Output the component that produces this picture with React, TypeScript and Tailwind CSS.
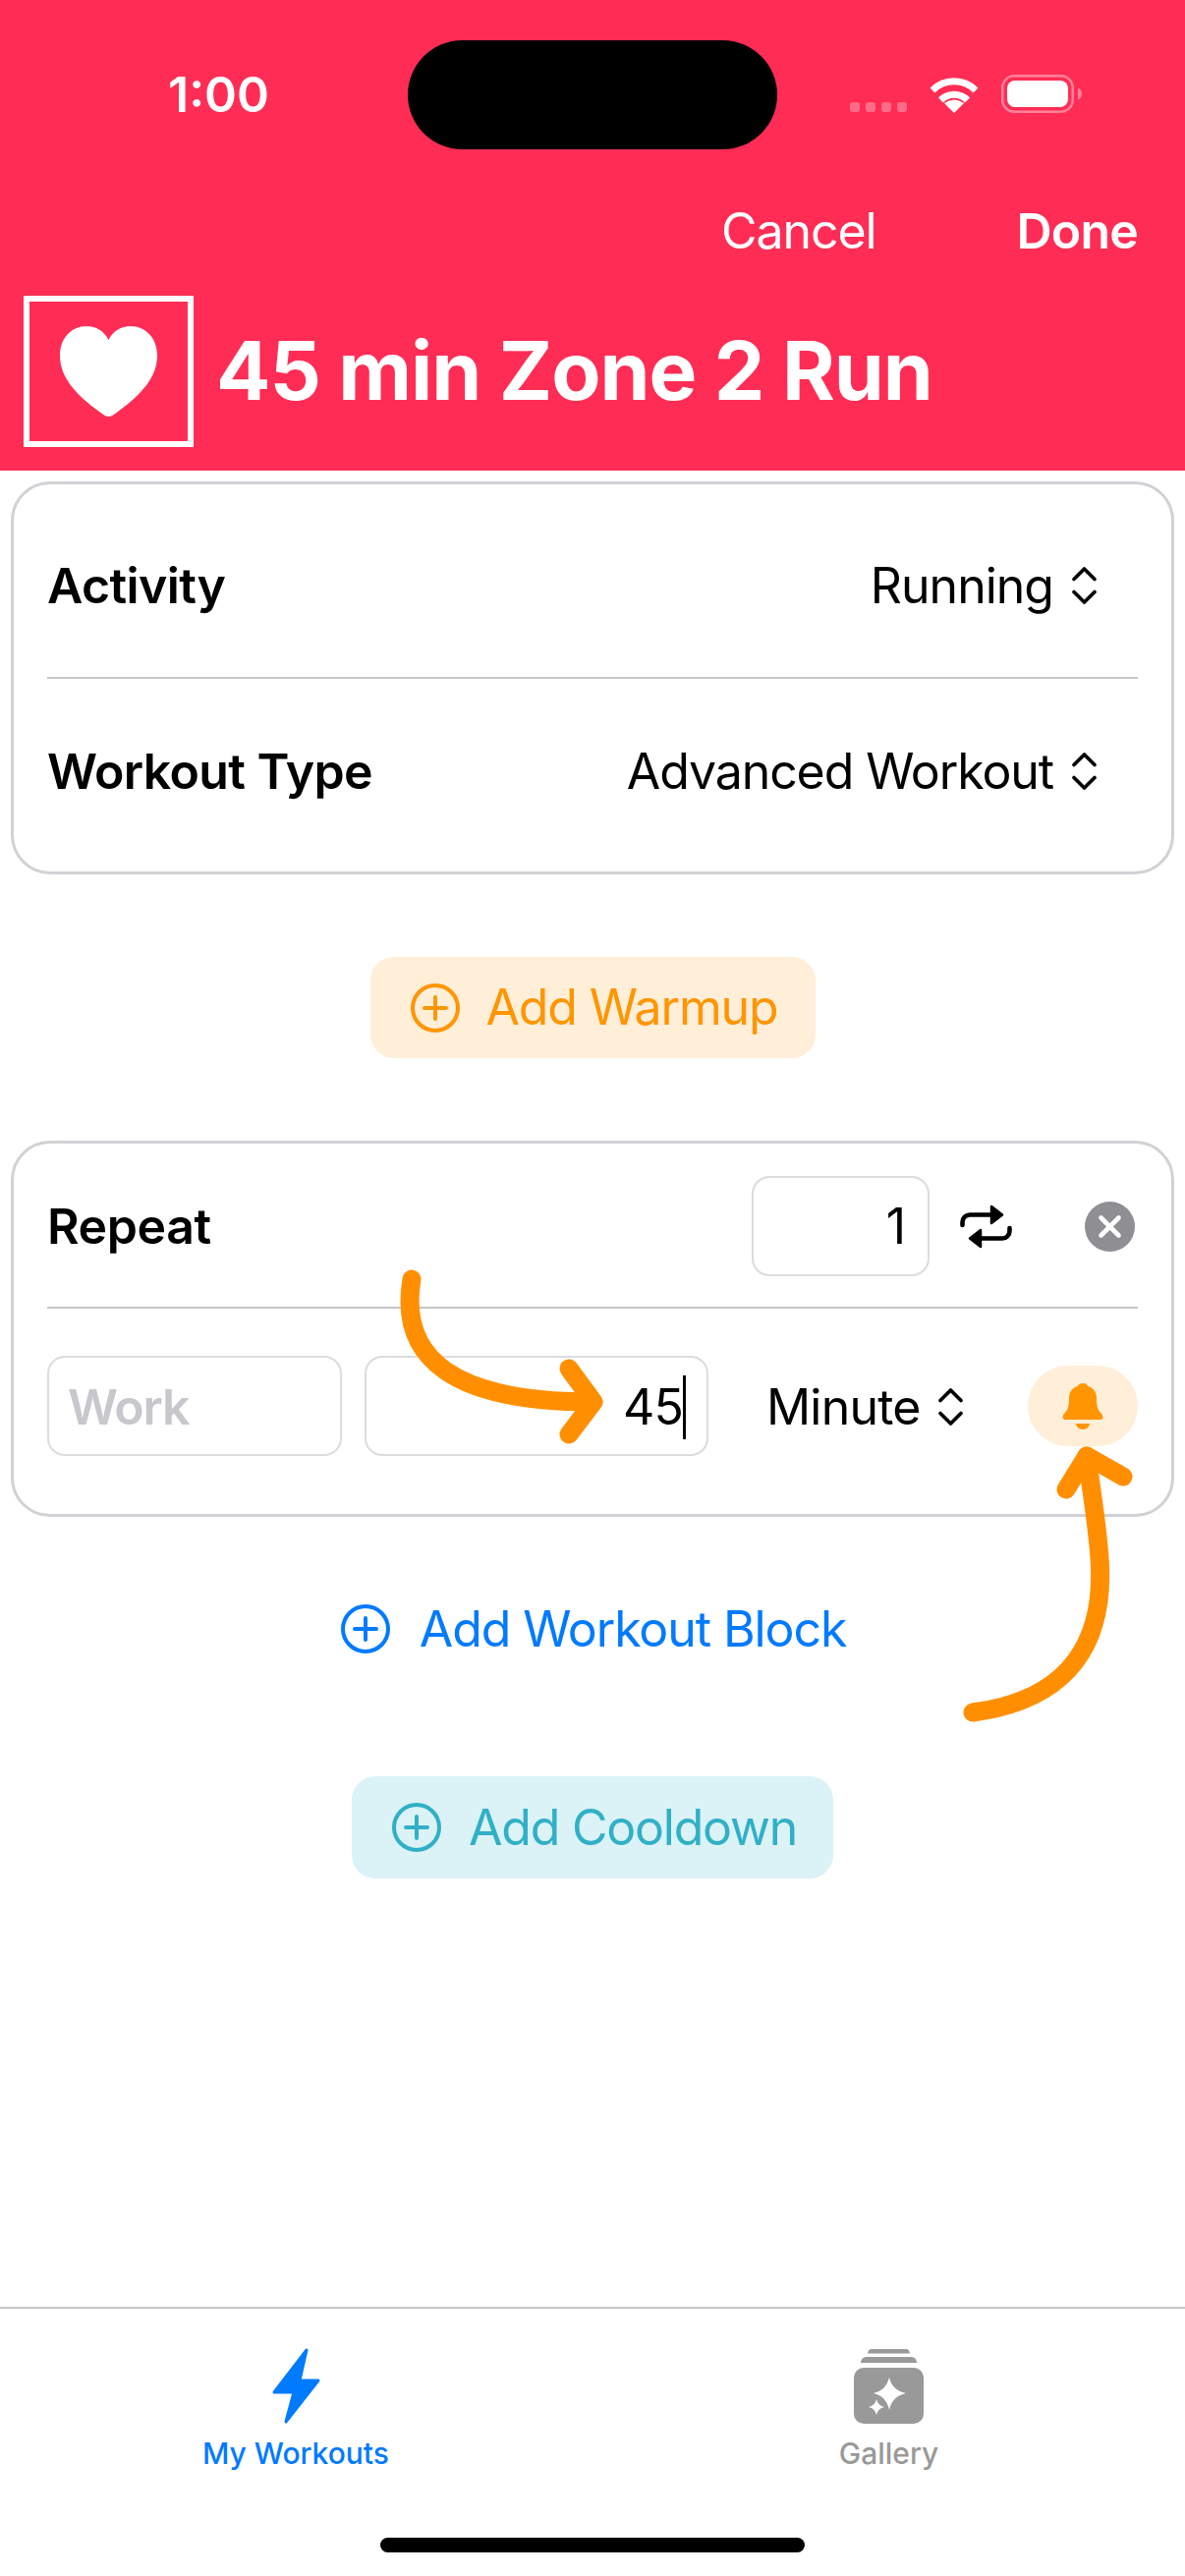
const ChevronUpDown = () => (
  <svg width="27" height="38" viewBox="0 0 27 38" fill="none" stroke="#000" strokeWidth="3.6" strokeLinecap="round" strokeLinejoin="round" className="shrink-0">
    <path d="M3 12.5 13.5 2 24 12.5" />
    <path d="M3 25.5 13.5 36 24 25.5" />
  </svg>
);

const PlusCircle = ({ color }: { color: string }) => (
  <svg width="50" height="50" viewBox="0 0 50 50" fill="none" stroke={color} strokeWidth="4" strokeLinecap="round" className="shrink-0">
    <circle cx="25" cy="25" r="23" />
    <path d="M14 25H36M25 14V36" />
  </svg>
);

const HeartIcon = () => (
  <svg width="99" height="92" viewBox="0 0 99 92" fill="#fff">
    <path d="M49.5 92C47 92 44 90 40 87C15 69 0 51 0 30C0 12 12 0 27 0C37 0 45 5 49.5 14C54 5 62 0 72 0C87 0 99 12 99 30C99 51 84 69 59 87C55 90 52 92 49.5 92Z" />
  </svg>
);

const WifiIcon = () => (
  <svg width="50" height="37" viewBox="0 0 50 37" fill="none" className="shrink-0">
    <path d="M3 14A31 31 0 0 1 47 14" stroke="#fff" strokeWidth="7" />
    <path d="M11.5 24A19 19 0 0 1 38.5 24" stroke="#fff" strokeWidth="7" />
    <path d="M25 37 15 27Q25 20 35 27Z" fill="#fff" />
  </svg>
);

const BatteryIcon = () => (
  <svg width="82" height="39" viewBox="0 0 82 39" fill="none" className="shrink-0">
    <rect x="1.25" y="1.25" width="71.5" height="36.5" rx="12" stroke="#fff" strokeOpacity="0.4" strokeWidth="2.5" />
    <rect x="6" y="6" width="62" height="27" rx="8" fill="#fff" />
    <path d="M78 13.5C80.5 14.5 82 16.5 82 19.5C82 22.5 80.5 24.5 78 25.5Z" fill="#fff" fillOpacity="0.4" />
  </svg>
);

const RepeatIcon = () => (
  <svg width="53" height="45" viewBox="0 0 53 45" fill="none" className="shrink-0">
    <path d="M2.5 21V18A7.5 7.5 0 0 1 10 10.5H33" stroke="#000" strokeWidth="4.6" strokeLinecap="round" />
    <path d="M32 2 43 10.5 32 19Z" fill="#000" stroke="#000" strokeWidth="2.5" strokeLinejoin="round" />
    <path d="M50.5 24V27A7.5 7.5 0 0 1 43 34.5H20" stroke="#000" strokeWidth="4.6" strokeLinecap="round" />
    <path d="M21 26 10 34.5 21 43Z" fill="#000" stroke="#000" strokeWidth="2.5" strokeLinejoin="round" />
  </svg>
);

const CloseCircle = () => (
  <svg width="51" height="51" viewBox="0 0 51 51" className="shrink-0">
    <circle cx="25.5" cy="25.5" r="25.5" fill="#8E8E93" />
    <path d="M16.5 16.5 34.5 34.5M34.5 16.5 16.5 34.5" stroke="#fff" strokeWidth="4.6" strokeLinecap="round" />
  </svg>
);

const BellIcon = () => (
  <svg width="42" height="47" viewBox="0 0 42 47" fill="#FF9500">
    <path d="M21 0C24 0 26 1.5 26.5 3C32 5 35 9 35 15C35 23 36 27 40 31C42 33 42 37 39 37H3C0 37 0 33 2 31C6 27 7 23 7 15C7 9 10 5 15.5 3C16 1.5 18 0 21 0Z" />
    <path d="M14 41H28A7 6 0 0 1 14 41Z" />
  </svg>
);

const BoltIcon = () => (
  <svg width="49" height="77" viewBox="0 0 49 77" fill="#007AFF" stroke="#007AFF" strokeWidth="3" strokeLinejoin="round">
    <path d="M35 2 28 33H47L14 75 22 45H2Z" />
  </svg>
);

const GalleryIcon = () => (
  <svg width="71" height="77" viewBox="0 0 71 77" fill="#999999">
    <path d="M14 5.5C14 3 16 1 18 1H53C55 1 57 3 57 5.5Z" />
    <path d="M7 15C7 11 10 9 13 9H58C61 9 64 11 64 15Z" />
    <rect x="0" y="20" width="71" height="57" rx="10" />
    <path d="M36 30Q39 43 53 46Q39 49 36 63Q33 49 20 46Q33 43 36 30Z" fill="#fff" />
    <path d="M23 52Q24.5 58.5 31 60Q24.5 61.5 23 68Q21.5 61.5 15 60Q21.5 58.5 23 52Z" fill="#fff" />
  </svg>
);

const Arrows = () => (
  <svg className="absolute inset-0 pointer-events-none" width="1206" height="2622" viewBox="0 0 1206 2622" fill="none" stroke="#FF8F00" strokeWidth="19" strokeLinecap="round" strokeLinejoin="round">
    <path d="M419 1302C405 1385 465 1427 603 1427" />
    <path d="M579 1393 604 1427 579 1460" />
    <path d="M990 1743C1090 1730 1125 1670 1119 1586C1117 1555 1112 1525 1106 1482" />
    <path d="M1085 1516 1106 1482 1143 1503" />
  </svg>
);

export default function App() {
  return (
    <div className="relative w-[1206px] h-[2622px] overflow-hidden bg-white flex flex-col font-['Inter',sans-serif] text-black">
      {/* Red header */}
      <header className="h-[479px] bg-[#FF2D55] text-white shrink-0">
        <div className="flex items-center pt-[41px]">
          <span className="w-[415px] pl-[171px] -mt-[2px] text-[50px] leading-[60px] font-semibold">1:00</span>
          <div className="w-[376px] h-[111px] rounded-[56px] bg-black" />
          <div className="flex items-end ml-[74px] -mt-[2px]">
            <div className="flex gap-[6px] mb-[1px] opacity-30">
              <span className="w-[10px] h-[10px] rounded-[3px] bg-white" />
              <span className="w-[10px] h-[10px] rounded-[3px] bg-white" />
              <span className="w-[10px] h-[10px] rounded-[3px] bg-white" />
              <span className="w-[10px] h-[10px] rounded-[3px] bg-white" />
            </div>
            <div className="ml-[23px]">
              <WifiIcon />
            </div>
            <div className="ml-[23px]">
              <BatteryIcon />
            </div>
          </div>
        </div>

        <div className="flex justify-end items-center gap-[143px] pr-[48px] mt-[53px] text-[50px] leading-[60px]">
          <span className="tracking-[-1.1px]">Cancel</span>
          <span className="font-semibold tracking-[-0.8px]">Done</span>
        </div>

        <div className="flex items-center gap-[23px] pl-[24px] mt-[36px]">
          <div className="w-[173px] h-[154px] border-[6px] border-white flex items-center justify-center">
            <HeartIcon />
          </div>
          <h1 className="text-[82px] leading-[100px] font-bold tracking-[-1px]">45 min Zone 2 Run</h1>
        </div>
      </header>

      <main className="flex-1 flex flex-col px-[11px]">
        {/* Activity card */}
        <section className="mt-[11px] h-[400px] rounded-[40px] border-[3px] border-[#D1D1D6] px-[34px]">
          <div className="h-[198px] pt-[10px] flex items-center justify-between border-b-2 border-[#C6C6C8] text-[50px]">
            <span className="font-semibold tracking-[-0.6px]">Activity</span>
            <div className="flex items-center gap-[18px] pr-[41px]">
              <span className="tracking-[-1px]">Running</span>
              <ChevronUpDown />
            </div>
          </div>
          <div className="h-[188px] flex items-center justify-between text-[50px]">
            <span className="font-semibold tracking-[-0.6px]">Workout Type</span>
            <div className="flex items-center gap-[18px] pr-[41px]">
              <span className="tracking-[-1.1px]">Advanced Workout</span>
              <ChevronUpDown />
            </div>
          </div>
        </section>

        <button className="mt-[84px] self-center w-[453px] h-[103px] pl-[4px] rounded-[24px] bg-[#FFEFD9] text-[#FF9500] text-[50px] tracking-[-1.1px] flex items-center justify-center gap-[26px]">
          <PlusCircle color="#FF9500" />
          <span>Add Warmup</span>
        </button>

        {/* Repeat card */}
        <section className="mt-[84px] h-[383px] rounded-[40px] border-[3px] border-[#D1D1D6] px-[34px]">
          <div className="h-[168px] pt-[2px] flex items-center border-b-2 border-[#C6C6C8] text-[50px]">
            <span className="font-semibold tracking-[-0.4px]">Repeat</span>
            <div className="ml-auto w-[181px] h-[102px] rounded-[18px] border-2 border-[#DCDCE0] flex items-center justify-end pr-[22px]">
              1
            </div>
            <div className="ml-[31px]">
              <RepeatIcon />
            </div>
            <div className="ml-[74px] mr-[3px]">
              <CloseCircle />
            </div>
          </div>
          <div className="pt-[48px] flex items-start text-[50px] tracking-[-0.8px]">
            <div className="w-[300px] h-[102px] pt-[2px] rounded-[18px] border-2 border-[#DCDCE0] flex items-center pl-[19px] text-[#C7C7CC] font-semibold tracking-[-1.2px]">
              Work
            </div>
            <div className="ml-[23px] w-[350px] h-[102px] pt-[2px] rounded-[18px] border-2 border-[#DCDCE0] flex items-center justify-end pr-[21px]">
              <span>45</span>
              <span className="w-[3px] h-[65px] bg-black" />
            </div>
            <div className="ml-[59px] h-[102px] pt-[2px] flex items-center gap-[17px]">
              <span>Minute</span>
              <ChevronUpDown />
            </div>
            <div className="ml-auto mt-[10px] w-[112px] h-[82px] rounded-[41px] bg-[#FFEFD9] flex items-center justify-center">
              <BellIcon />
            </div>
          </div>
        </section>

        <button className="mt-[64px] h-[100px] pl-[2px] self-center flex items-center gap-[30px] text-[50px] tracking-[-1.1px] text-[#007AFF]">
          <PlusCircle color="#007AFF" />
          <span>Add Workout Block</span>
        </button>

        <button className="mt-[100px] self-center w-[490px] h-[104px] pl-[4px] rounded-[24px] bg-[#DBF2F7] text-[#30B0C7] text-[50px] tracking-[-1.2px] flex items-center justify-center gap-[28px]">
          <PlusCircle color="#30B0C7" />
          <span>Add Cooldown</span>
        </button>
      </main>

      {/* Tab bar */}
      <nav className="h-[274px] shrink-0 border-t-2 border-[#C6C6C8] flex flex-col">
        <div className="grid grid-cols-2 pt-[40px] text-[30px] leading-[36px] font-medium">
          <div className="flex flex-col items-center gap-[12px] text-[#007AFF] -ml-[1px]">
            <BoltIcon />
            <span>My Workouts</span>
          </div>
          <div className="flex flex-col items-center gap-[12px] text-[#999999]">
            <GalleryIcon />
            <span>Gallery</span>
          </div>
        </div>
        <div className="mt-[68px] self-center w-[432px] h-[15px] rounded-full bg-black" />
      </nav>

      <Arrows />
    </div>
  );
}
